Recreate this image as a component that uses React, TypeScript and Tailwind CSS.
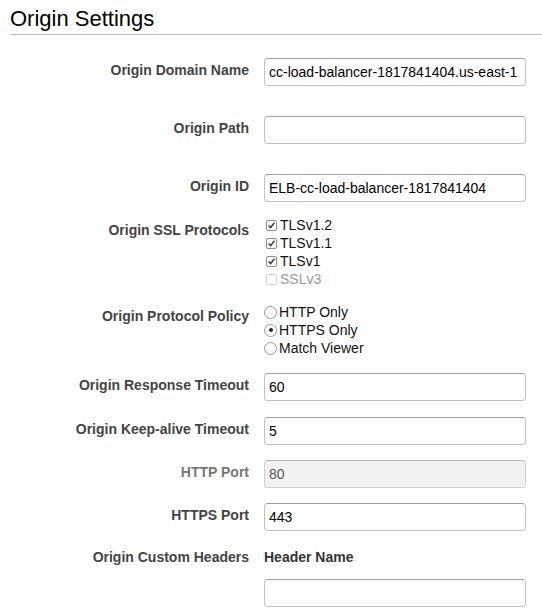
import React from 'react';

const inputBase =
  "w-[262px] h-[28px] px-[4px] border rounded-[4px] text-[14px] outline-none";

const Row: React.FC<{ label: string; className?: string; labelPad?: string; muted?: boolean; children: React.ReactNode }> = ({
  label,
  className = '',
  labelPad = 'pt-[4px]',
  muted,
  children,
}) => (
  <div className={`grid grid-cols-[249px_262px] gap-x-[15px] ${className}`}>
    <div
      className={`text-right text-[14px] leading-[17px] font-bold ${labelPad} ${muted ? 'text-[#777]' : 'text-[#444]'}`}
    >
      {label}
    </div>
    <div>{children}</div>
  </div>
);

const TextField: React.FC<{ value?: string; disabled?: boolean }> = ({ value = '', disabled }) => (
  <input
    readOnly
    value={value}
    disabled={disabled}
    className={`${inputBase} ${
      disabled
        ? 'bg-[#f3f2f0] text-[#555] border-[#cfcfcf] border-t-[#b2b2b2]'
        : 'bg-white text-black border-[#c2c2c2] border-t-[#a0a0a0]'
    }`}
  />
);

const Check: React.FC<{ label: string; checked?: boolean; disabled?: boolean }> = ({ label, checked, disabled }) => (
  <div className="flex items-center h-[18px]">
    <span
      className={`ml-[2px] w-[11px] h-[11px] rounded-[2px] border flex items-center justify-center bg-white ${
        disabled ? 'border-[#d4d4d4]' : 'border-[#8f8f8f]'
      }`}
    >
      {checked && (
        <svg width="9" height="9" viewBox="0 0 9 9">
          <path d="M1.6 4.6 L3.6 6.6 L7.4 1.8" fill="none" stroke="#333" strokeWidth="1.4" />
        </svg>
      )}
    </span>
    <span className={`ml-[3px] text-[14px] leading-[18px] ${disabled ? 'text-[#9a9a9a]' : 'text-[#111]'}`}>{label}</span>
  </div>
);

const Radio: React.FC<{ label: string; checked?: boolean }> = ({ label, checked }) => (
  <div className="flex items-center h-[18px]">
    <span className="w-[13px] h-[13px] rounded-full border border-[#9a9a9a] bg-white flex items-center justify-center">
      {checked && <span className="w-[4px] h-[4px] rounded-full bg-[#222]" />}
    </span>
    <span className="ml-[2px] text-[14px] leading-[18px] text-[#111]">{label}</span>
  </div>
);

export default function App() {
  return (
    <div className="w-[542px] min-h-[614px] bg-white overflow-hidden font-['Liberation_Sans',Arial,sans-serif]">
      <div className="pl-[10px] pt-[6px]">
        <h2 className="text-[22px] leading-[26px] text-black pb-[2px] border-b border-[#b8b8b8]">Origin Settings</h2>
      </div>

      <Row label="Origin Domain Name" className="mt-[23px]">
        <TextField value="cc-load-balancer-1817841404.us-east-1" />
      </Row>
      <Row label="Origin Path" className="mt-[30px]">
        <TextField />
      </Row>
      <Row label="Origin ID" className="mt-[30px]">
        <TextField value="ELB-cc-load-balancer-1817841404" />
      </Row>

      <Row label="Origin SSL Protocols" className="mt-[14px]" labelPad="pt-[6px]">
        <Check label="TLSv1.2" checked />
        <Check label="TLSv1.1" checked />
        <Check label="TLSv1" checked />
        <Check label="SSLv3" disabled />
      </Row>

      <Row label="Origin Protocol Policy" className="mt-[15px]" labelPad="pt-[5px]">
        <Radio label="HTTP Only" />
        <Radio label="HTTPS Only" checked />
        <Radio label="Match Viewer" />
      </Row>

      <Row label="Origin Response Timeout" className="mt-[16px]">
        <TextField value="60" />
      </Row>
      <Row label="Origin Keep-alive Timeout" className="mt-[16px]">
        <TextField value="5" />
      </Row>
      <Row label="HTTP Port" className="mt-[15px]" muted>
        <TextField value="80" disabled />
      </Row>
      <Row label="HTTPS Port" className="mt-[15px]">
        <TextField value="443" />
      </Row>

      <Row label="Origin Custom Headers" className="mt-[18px]" labelPad="pt-0">
        <div className="text-[14px] leading-[17px] font-bold text-[#333]">Header Name</div>
        <div className="mt-[13px]">
          <TextField />
        </div>
      </Row>
    </div>
  );
}
